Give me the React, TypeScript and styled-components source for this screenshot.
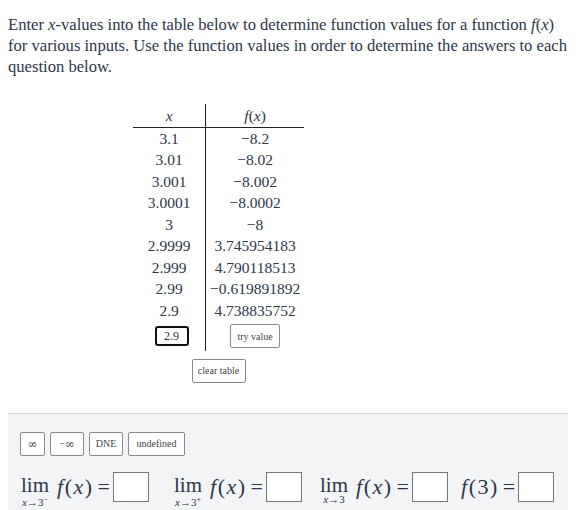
import React from "react";
import styled, { createGlobalStyle } from "styled-components";

const Global = createGlobalStyle`
  html, body { margin: 0; padding: 0; background: #fff; }
  body { margin: 8px; font-family: "Liberation Serif", "DejaVu Serif", serif; color: #2d3748; overflow: hidden; }
`;

const Intro = styled.p`
  margin: 6px 0 0 0;
  font-family: "Liberation Serif", serif;
  font-size: 16.6px;
  line-height: 21px;
  color: #2d3748;
  width: 566px;
`;

const MathI = styled.i`
  font-family: "Liberation Serif", serif;
  font-style: italic;
`;

const TableWrap = styled.div`
  margin: 27px 0 0 125px;
  width: 171px;
  display: flex;
  flex-direction: column;
  align-items: center;
`;

const Table = styled.table`
  border-collapse: collapse;
  font-family: "Liberation Serif", serif;
  font-size: 15.5px;
  color: #2d3748;
`;

const Th = styled.th<{ $right?: boolean }>`
  font-family: "Liberation Serif", serif;
  font-size: 15.5px;
  font-weight: normal;
  color: #2d3748;
  height: 23px;
  padding: 0;
  border-bottom: 1.5px solid #222;
  ${(p) => (p.$right ? "border-left: 1.5px solid #222;" : "")}
  width: ${(p) => (p.$right ? "98px" : "73px")};
  text-align: center;
  vertical-align: middle;
`;

const Td = styled.td<{ $right?: boolean }>`
  font-family: "Liberation Serif", serif;
  font-size: 15.5px;
  color: #2d3748;
  height: 21.5px;
  padding: 0;
  text-align: center;
  vertical-align: middle;
  ${(p) => (p.$right ? "border-left: 1.5px solid #222;" : "")}
`;

const InputCell = styled.td<{ $right?: boolean }>`
  height: 29px;
  padding: 0;
  text-align: center;
  vertical-align: middle;
  ${(p) => (p.$right ? "border-left: 1.5px solid #222;" : "")}
`;

const XInput = styled.div`
  display: inline-flex;
  align-items: center;
  justify-content: center;
  width: 30px;
  height: 16px;
  border: 2px solid #111;
  border-radius: 3px;
  font-family: "Liberation Serif", serif;
  font-size: 12px;
  color: #333;
  margin-left: 5px;
`;

const SmallBtn = styled.div<{ $w: number }>`
  display: inline-flex;
  align-items: center;
  justify-content: center;
  box-sizing: border-box;
  width: ${(p) => p.$w}px;
  height: 24px;
  flex: none;
  border: 1px solid #8a8a8a;
  border-radius: 2px;
  background: #fff;
  font-family: "Liberation Serif", serif;
  font-size: 10px;
  color: #444;
`;

const Inf = styled.span`
  font-family: "DejaVu Serif", serif;
  font-size: 12px;
  line-height: 12px;
`;

const ClearRow = styled.div`
  margin-top: 8px;
  display: flex;
  justify-content: center;
  width: 100%;
`;

const Panel = styled.div`
  margin: 30px -20px 0 -1px;
  background: #f3f4f6;
  border: 1px solid #d4d6da;
  border-right: none;
  padding: 18px 0 10px 12px;
  height: 90px;
`;

const BtnRow = styled.div`
  display: flex;
  gap: 5px;
`;

const LimRow = styled.div`
  margin-top: 16px;
  display: flex;
  align-items: flex-start;
  font-family: "Liberation Serif", serif;
  font-size: 22px;
  color: #2d3748;
`;

const Expr = styled.div<{ $w: number }>`
  display: flex;
  align-items: flex-start;
  width: ${(p) => p.$w}px;
  flex: none;
`;

const LimCol = styled.div`
  display: flex;
  flex-direction: column;
  align-items: center;
  margin-right: 8px;
  margin-left: 1px;
`;

const LimWord = styled.span`
  line-height: 26px;
  height: 22px;
  font-size: 21px;
`;

const Sub = styled.span`
  font-size: 11px;
  line-height: 11px;
`;

const Sup = styled.sup`
  font-size: 8px;
  vertical-align: 4px;
`;

const Fx = styled.span`
  line-height: 30px;
  letter-spacing: 1.5px;
  white-space: pre;
`;

const Eq = styled.span`
  line-height: 30px;
  margin: 0 3px 0 4px;
`;

const AnsBox = styled.div`
  width: 34px;
  height: 28px;
  border: 1px solid #777;
  background: #fff;
  flex: none;
`;

const rows: [string, string][] = [
  ["3.1", "−8.2"],
  ["3.01", "−8.02"],
  ["3.001", "−8.002"],
  ["3.0001", "−8.0002"],
  ["3", "−8"],
  ["2.9999", "3.745954183"],
  ["2.999", "4.790118513"],
  ["2.99", "−0.619891892"],
  ["2.9", "4.738835752"],
];

export default function App() {
  return (
    <>
      <Global />
      <Intro>
        Enter <MathI>x</MathI>-values into the table below to determine function values for a function{" "}
        <MathI>f</MathI>(<MathI>x</MathI>) for various inputs. Use the function values in order to determine the
        answers to each question below.
      </Intro>
      <TableWrap>
        <Table>
          <thead>
            <tr>
              <Th><MathI>x</MathI></Th>
              <Th $right><MathI>f</MathI>(<MathI>x</MathI>)</Th>
            </tr>
          </thead>
          <tbody>
            {rows.map(([a, b]) => (
              <tr key={a}>
                <Td>{a}</Td>
                <Td $right>{b}</Td>
              </tr>
            ))}
            <tr>
              <InputCell><XInput>2.9</XInput></InputCell>
              <InputCell $right><SmallBtn $w={50}>try value</SmallBtn></InputCell>
            </tr>
          </tbody>
        </Table>
        <ClearRow>
          <SmallBtn $w={54}>clear table</SmallBtn>
        </ClearRow>
      </TableWrap>
      <Panel>
        <BtnRow>
          <SmallBtn $w={25}><Inf>∞</Inf></SmallBtn>
          <SmallBtn $w={34}>−<Inf>∞</Inf></SmallBtn>
          <SmallBtn $w={34}>DNE</SmallBtn>
          <SmallBtn $w={57}>undefined</SmallBtn>
        </BtnRow>
        <LimRow>
          <Expr $w={153}>
            <LimCol>
              <LimWord>lim</LimWord>
              <Sub><MathI>x</MathI>→3<Sup>−</Sup></Sub>
            </LimCol>
            <Fx><MathI>f</MathI>(<MathI>x</MathI>)</Fx>
            <Eq>=</Eq>
            <AnsBox />
          </Expr>
          <Expr $w={146}>
            <LimCol>
              <LimWord>lim</LimWord>
              <Sub><MathI>x</MathI>→3<Sup>+</Sup></Sub>
            </LimCol>
            <Fx><MathI>f</MathI>(<MathI>x</MathI>)</Fx>
            <Eq>=</Eq>
            <AnsBox />
          </Expr>
          <Expr $w={142}>
            <LimCol>
              <LimWord>lim</LimWord>
              <Sub><MathI>x</MathI>→3</Sub>
            </LimCol>
            <Fx><MathI>f</MathI>(<MathI>x</MathI>)</Fx>
            <Eq>=</Eq>
            <AnsBox />
          </Expr>
          <Expr $w={100}>
            <Fx><MathI>f</MathI>(3)</Fx>
            <Eq>=</Eq>
            <AnsBox />
          </Expr>
        </LimRow>
      </Panel>
    </>
  );
}
